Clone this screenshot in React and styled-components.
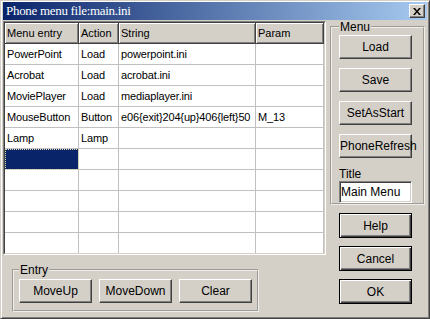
import React from 'react';
import styled, { createGlobalStyle } from 'styled-components';

const GlobalStyle = createGlobalStyle`
  body {
    margin: 0;
    font-family: "Liberation Sans", Arial, sans-serif;
    font-size: 12px;
    color: #000;
  }
`;

const columns = [
  { title: 'Menu entry', width: 74 },
  { title: 'Action', width: 40 },
  { title: 'String', width: 137 },
  { title: 'Param', width: 68 },
];

const rows = [
  ['PowerPoint', 'Load', 'powerpoint.ini', ''],
  ['Acrobat', 'Load', 'acrobat.ini', ''],
  ['MoviePlayer', 'Load', 'mediaplayer.ini', ''],
  ['MouseButton', 'Button', 'e06{exit}204{up}406{left}50', 'M_13'],
  ['Lamp', 'Lamp', '', ''],
  ['', '', '', ''],
  ['', '', '', ''],
  ['', '', '', ''],
  ['', '', '', ''],
  ['', '', '', ''],
];

const App = () => {
  return (
    <>
      <GlobalStyle />
      <Window>
        <TitleBar>
          <TitleText>Phone menu file:main.ini</TitleText>
          <CloseButton>
            <svg width="8" height="7" viewBox="0 0 8 7">
              <path d="M0 0h2l2 2.5L6 0h2L5 3.5 8 7H6L4 4.5 2 7H0l3-3.5z" fill="#000" />
            </svg>
          </CloseButton>
        </TitleBar>
        <Body>
          <LeftColumn>
            <GridFrame>
              <GridInner>
                <Grid>
                  {columns.map((c) => (
                    <HeaderCell key={c.title}>{c.title}</HeaderCell>
                  ))}
                  {rows.map((row, r) =>
                    row.map((text, c) => (
                      <Cell key={`${r}-${c}`} $selected={r === 5 && c === 0}>
                        {text}
                      </Cell>
                    ))
                  )}
                </Grid>
              </GridInner>
            </GridFrame>
            <EntryGroup>
              <Legend>Entry</Legend>
              <ButtonRow>
                <Button>MoveUp</Button>
                <Button>MoveDown</Button>
                <Button>Clear</Button>
              </ButtonRow>
            </EntryGroup>
          </LeftColumn>
          <RightColumn>
            <MenuGroup>
              <Legend>Menu</Legend>
              <ButtonStack>
                <Button>Load</Button>
                <Button>Save</Button>
                <Button>SetAsStart</Button>
                <Button>PhoneRefresh</Button>
              </ButtonStack>
              <FieldLabel>Title</FieldLabel>
              <TextInput defaultValue="Main Menu" />
            </MenuGroup>
            <DialogButtons>
              <Button $framed>Help</Button>
              <Button $framed>Cancel</Button>
              <Button $framed>OK</Button>
            </DialogButtons>
          </RightColumn>
        </Body>
      </Window>
    </>
  );
};

export default App;

const Window = styled.div`
  width: 430px;
  height: 319px;
  box-sizing: border-box;
  background: #d4d0c8;
  border: 1px solid;
  border-color: #d4d0c8 #404040 #404040 #d4d0c8;
  box-shadow: inset 1px 1px #fff, inset -1px -1px #808080;
  padding: 1px 2px 2px 2px;
`;

const TitleBar = styled.div`
  height: 18px;
  display: flex;
  align-items: center;
  justify-content: space-between;
  padding: 0 2px 0 3px;
  background: linear-gradient(to right, #0a246a, #a6caf0);
`;

const TitleText = styled.span`
  font-family: "Liberation Serif", "Times New Roman", serif;
  font-size: 13px;
  color: #fff;
  letter-spacing: -0.3px;
`;

const CloseButton = styled.div`
  width: 16px;
  height: 14px;
  box-sizing: border-box;
  display: flex;
  align-items: center;
  justify-content: center;
  background: #d4d0c8;
  border: 1px solid;
  border-color: #fff #404040 #404040 #fff;
  box-shadow: inset -1px -1px #808080;
`;

const Body = styled.div`
  display: flex;
  gap: 4px;
  padding-top: 1px;
`;

const LeftColumn = styled.div`
  display: flex;
  flex-direction: column;
  width: 323px;
`;

const GridFrame = styled.div`
  border: 1px solid;
  border-color: #808080 #fff #fff #808080;
  height: 234px;
  box-sizing: border-box;
`;

const GridInner = styled.div`
  border: 1px solid;
  border-color: #404040 #d4d0c8 #d4d0c8 #404040;
  height: 100%;
  box-sizing: border-box;
  background: #fff;
  overflow: hidden;
`;

const Grid = styled.div`
  display: grid;
  grid-template-columns: ${columns.map((c) => `${c.width}px`).join(' ')};
  grid-auto-rows: 21px;
  font-size: 11px;
`;

const HeaderCell = styled.div`
  display: flex;
  align-items: center;
  padding-left: 2px;
  background: #d4d0c8;
  border-right: 1px solid #404040;
  border-bottom: 1px solid #404040;
  box-shadow: inset 1px 1px #fff, inset -1px -1px #808080;
  white-space: nowrap;
  overflow: hidden;
`;

const Cell = styled.div`
  display: flex;
  align-items: center;
  box-sizing: border-box;
  padding-left: 2px;
  border-right: 1px solid #c0c0c0;
  border-bottom: 1px solid #c0c0c0;
  white-space: nowrap;
  overflow: hidden;
  letter-spacing: -0.15px;
  background: ${(p) => (p.$selected ? '#0a246a' : '#fff')};
  outline: ${(p) => (p.$selected ? '1px dotted #e8e0b0' : 'none')};
  outline-offset: -1px;
`;

const GroupBox = styled.fieldset`
  margin: 0;
  min-width: 0;
  border: 2px groove #f0eee8;
`;

const Legend = styled.legend`
  padding: 0 1px;
  font-size: 12px;
  line-height: 12px;
`;

const EntryGroup = styled(GroupBox)`
  margin: 9px 0 0 9px;
  width: 247px;
  box-sizing: border-box;
  padding: 3px 5px 7px 5px;
`;

const ButtonRow = styled.div`
  display: flex;
  gap: 7px;
`;

const RightColumn = styled.div`
  display: flex;
  flex-direction: column;
  width: 96px;
`;

const MenuGroup = styled(GroupBox)`
  width: 95px;
  height: 184px;
  box-sizing: border-box;
  padding: 2px 7px 0 7px;
  display: flex;
  flex-direction: column;
`;

const ButtonStack = styled.div`
  display: flex;
  flex-direction: column;
  gap: 9px;
`;

const FieldLabel = styled.div`
  margin-top: 9px;
  height: 14px;
  line-height: 14px;
`;

const TextInput = styled.input`
  width: 73px;
  height: 22px;
  box-sizing: border-box;
  margin: 0;
  padding: 0 1px;
  font-family: "Liberation Sans", Arial, sans-serif;
  font-size: 12px;
  color: #000;
  background: #fff;
  border: 1px solid;
  border-color: #808080 #fff #fff #808080;
  box-shadow: inset 1px 1px #404040, inset -1px -1px #d4d0c8;
  outline: none;
`;

const DialogButtons = styled.div`
  display: flex;
  flex-direction: column;
  gap: 8px;
  margin: 8px 0 0 9px;
`;

const Button = styled.button`
  width: 73px;
  height: ${(p) => (p.$framed ? '25px' : '24px')};
  box-sizing: border-box;
  margin: 0;
  padding: 0;
  font-family: "Liberation Sans", Arial, sans-serif;
  font-size: 12px;
  color: #000;
  background: #d4d0c8;
  border: 1px solid;
  border-color: ${(p) => (p.$framed ? '#000' : '#fff #404040 #404040 #fff')};
  box-shadow: ${(p) =>
    p.$framed
      ? 'inset 1px 1px #fff, inset -1px -1px #404040, inset -2px -2px #808080'
      : 'inset -1px -1px #808080'};
`;
